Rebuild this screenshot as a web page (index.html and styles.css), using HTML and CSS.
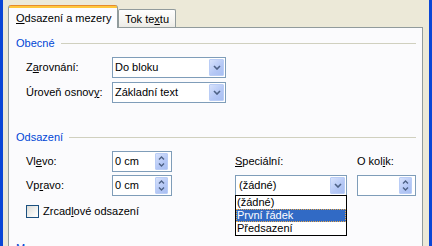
FILE: index.html
```html
<!DOCTYPE html>
<html lang="cs">
<head>
  <meta charset="UTF-8" />
  <title>Odstavec</title>
  <link rel="stylesheet" href="styles.css">
</head>
<body>
  <div class="window">
    <div class="tabs">
      <div class="tab active"><u>O</u>dsazení a mezery</div>
      <div class="tab">Tok te<u>x</u>tu</div>
    </div>

    <div class="panel">
      <div class="group-title">Obecné</div>
      <div class="rows">
        <div class="row">
          <span class="label">Z<u>a</u>rovnání:</span>
          <div class="combo">
            <span class="value">Do bloku</span>
            <span class="drop-btn"><svg width="8" height="5" viewBox="0 0 8 5"><polyline points="1,1 4,4 7,1" fill="none" stroke="#4d6185" stroke-width="1.6"/></svg></span>
          </div>
        </div>
        <div class="row">
          <span class="label">Úroveň osnov<u>y</u>:</span>
          <div class="combo">
            <span class="value">Základní text</span>
            <span class="drop-btn"><svg width="8" height="5" viewBox="0 0 8 5"><polyline points="1,1 4,4 7,1" fill="none" stroke="#4d6185" stroke-width="1.6"/></svg></span>
          </div>
        </div>
      </div>

      <div class="group-title second">Odsazení</div>
      <div class="indent-grid">
        <span class="label">Vl<u>e</u>vo:</span>
        <div class="spinner">
          <span class="value">0 cm</span>
          <span class="spin-btn">
            <svg width="7" height="4" viewBox="0 0 7 4"><polyline points="1,3.5 3.5,1 6,3.5" fill="none" stroke="#4d6185" stroke-width="1.4"/></svg>
            <svg width="7" height="4" viewBox="0 0 7 4"><polyline points="1,0.5 3.5,3 6,0.5" fill="none" stroke="#4d6185" stroke-width="1.4"/></svg>
          </span>
        </div>
        <span></span>
        <span class="label"><u>S</u>peciální:</span>
        <span></span>
        <span class="label">O kol<u>i</u>k:</span>

        <span class="label">Vp<u>r</u>avo:</span>
        <div class="spinner">
          <span class="value">0 cm</span>
          <span class="spin-btn">
            <svg width="7" height="4" viewBox="0 0 7 4"><polyline points="1,3.5 3.5,1 6,3.5" fill="none" stroke="#4d6185" stroke-width="1.4"/></svg>
            <svg width="7" height="4" viewBox="0 0 7 4"><polyline points="1,0.5 3.5,3 6,0.5" fill="none" stroke="#4d6185" stroke-width="1.4"/></svg>
          </span>
        </div>
        <span></span>
        <div class="combo special">
          <span class="value">(žádné)</span>
          <span class="drop-btn"><svg width="8" height="5" viewBox="0 0 8 5"><polyline points="1,1 4,4 7,1" fill="none" stroke="#4d6185" stroke-width="1.6"/></svg></span>
          <div class="dropdown">
            <div class="item">(žádné)</div>
            <div class="item selected">První řádek</div>
            <div class="item">Předsazení</div>
          </div>
        </div>
        <span></span>
        <div class="spinner">
          <span class="value"></span>
          <span class="spin-btn">
            <svg width="7" height="4" viewBox="0 0 7 4"><polyline points="1,3.5 3.5,1 6,3.5" fill="none" stroke="#4d6185" stroke-width="1.4"/></svg>
            <svg width="7" height="4" viewBox="0 0 7 4"><polyline points="1,0.5 3.5,3 6,0.5" fill="none" stroke="#4d6185" stroke-width="1.4"/></svg>
          </span>
        </div>
      </div>

      <div class="check-row">
        <span class="checkbox"></span>
        <span>Zrcad<u>l</u>ové odsazení</span>
      </div>

      <div class="group-title third">Mezery</div>
    </div>
  </div>
</body>
</html>
```

FILE: styles.css
```css
body {
  margin: 0;
  width: 432px;
  height: 246px;
  overflow: hidden;
  font-family: "Liberation Sans", Arial, sans-serif;
  font-size: 11px;
  line-height: 13px;
  color: #000;
}

.window {
  box-sizing: border-box;
  height: 246px;
  overflow: hidden;
  background: #ece9d8;
  border-left: 3px solid #0a46d6;
  border-right: 3px solid #0a46d6;
  padding: 5px 6px 0 5px;
}

u {
  text-decoration: underline;
  text-underline-offset: 1px;
}

/* tabs */
.tabs {
  display: flex;
  align-items: flex-end;
  height: 22px;
  position: relative;
  z-index: 1;
}

.tab {
  box-sizing: border-box;
  border: 1px solid #919b9c;
  border-bottom: none;
  white-space: nowrap;
}

.tab.active {
  width: 110px;
  height: 23px;
  margin-bottom: -1px;
  padding: 7px 0 0 7px;
  border-radius: 3px 3px 0 0;
  border-top: none;
  background: linear-gradient(#e68b2c 0 1px, #ffc73c 1px 3px, #fcfcfe 3px);
}

.tab:not(.active) {
  width: 58px;
  height: 18px;
  padding: 3px 0 0 6px;
  border-radius: 2px 2px 0 0;
  background: linear-gradient(#fefefe, #f4f3ef 70%, #ecebe6);
}

/* panel */
.panel {
  box-sizing: border-box;
  height: 240px;
  border: 1px solid #919b9c;
  background: #fbfbfd;
  padding: 9px 6px 0 7px;
}

.group-title {
  display: flex;
  align-items: center;
  gap: 6px;
  height: 13px;
  color: #0046d5;
}

.group-title::after {
  content: '';
  flex: 1;
  border-top: 1px solid #d0d0bf;
}

.group-title.second {
  margin-top: 28px;
}

.group-title.third {
  margin-top: 24px;
}

.rows {
  display: flex;
  flex-direction: column;
  gap: 4px;
  margin-top: 7px;
  padding-left: 10px;
}

.row {
  display: flex;
  align-items: center;
  height: 21px;
}

.row .label {
  width: 86px;
}

.label {
  align-self: center;
}

/* combo boxes */
.combo, .spinner {
  box-sizing: border-box;
  display: flex;
  align-items: center;
  height: 21px;
  border: 1px solid #7f9db9;
  background: #fff;
  padding-left: 2px;
  position: relative;
}

.combo {
  width: 114px;
}

.combo.special {
  width: 112px;
  padding-left: 3px;
}

.drop-btn {
  box-sizing: border-box;
  display: flex;
  align-items: center;
  justify-content: center;
  margin-left: auto;
  margin-right: 1px;
  width: 15px;
  height: 17px;
  border: 1px solid #bacdf6;
  border-radius: 1px;
  background: linear-gradient(135deg, #d7e2fc, #b4c7f5 60%, #a9bff2);
}

.dropdown {
  position: absolute;
  left: -1px;
  top: 19px;
  width: 112px;
  box-sizing: border-box;
  border: 1px solid #000;
  background: #fff;
}

.item {
  height: 13px;
  padding-left: 1px;
  white-space: nowrap;
}

.item.selected {
  background: #316ac5;
  color: #fff;
  outline: 1px dotted #e8a84a;
  outline-offset: -1px;
}

/* indent section */
.indent-grid {
  display: grid;
  grid-template-columns: 86px 60px 63px 112px 10px 59px;
  grid-template-rows: 21px 21px;
  row-gap: 3px;
  margin-top: 7px;
  padding-left: 10px;
}

.spin-btn {
  box-sizing: border-box;
  display: flex;
  flex-direction: column;
  align-items: center;
  justify-content: space-around;
  margin-left: auto;
  margin-right: 3px;
  width: 13px;
  height: 17px;
  padding: 1px 0;
  border: 1px solid #bacdf6;
  border-radius: 1px;
  background: linear-gradient(135deg, #d7e2fc, #b4c7f5 60%, #a9bff2);
}

/* checkbox */
.check-row {
  display: flex;
  align-items: center;
  gap: 4px;
  margin-top: 9px;
  padding-left: 10px;
  height: 13px;
}

.checkbox {
  box-sizing: border-box;
  width: 13px;
  height: 13px;
  border: 1px solid #1c5180;
  background: linear-gradient(135deg, #dcdcd7, #f8f8f6 70%, #fff);
}
```
